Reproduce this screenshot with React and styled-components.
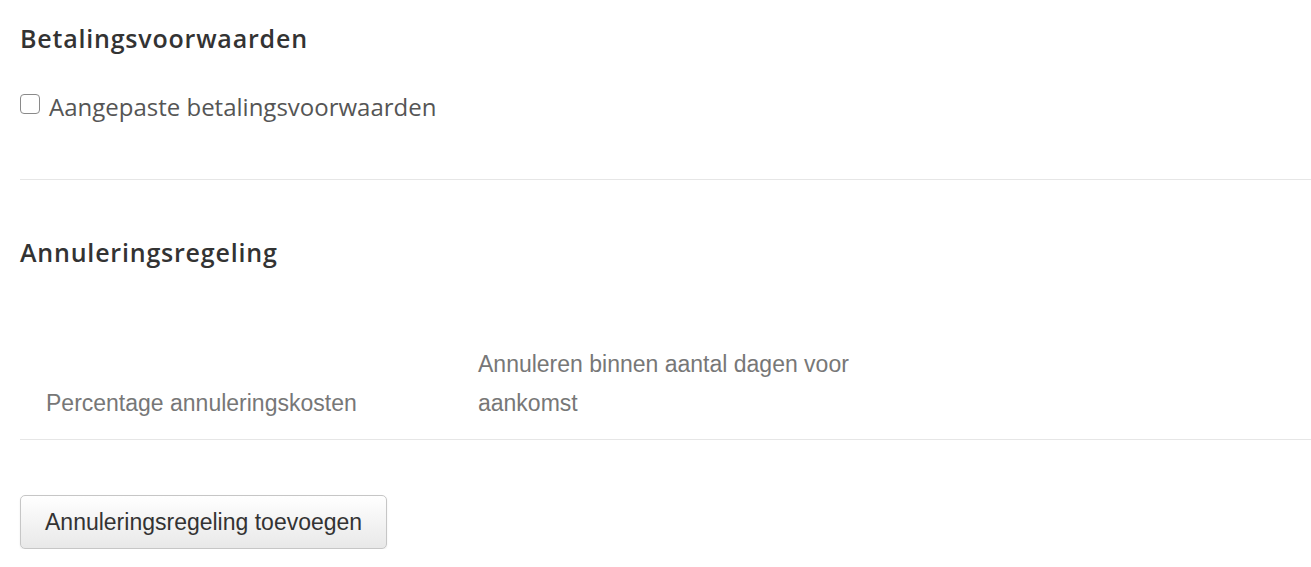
import React from 'react';
import styled, { createGlobalStyle } from 'styled-components';

const GlobalStyle = createGlobalStyle`
  body {
    margin: 0;
    background: #ffffff;
    font-family: "Liberation Sans", Arial, sans-serif;
  }
`;

const Page = styled.div`
  padding: 0 0 0 20px;
`;

const Section = styled.section`
  padding-top: ${props => props.top}px;
  padding-bottom: ${props => props.bottom || 0}px;
  border-bottom: ${props => props.divided ? '1px solid #e6e6e6' : 'none'};
`;

const Heading = styled.h2`
  margin: 0;
  font-family: "Open Sans", sans-serif;
  font-weight: 600;
  font-size: 25px;
  letter-spacing: 0.8px;
  line-height: 30px;
  color: #333333;
`;

const CheckRow = styled.label`
  display: flex;
  align-items: center;
  gap: 9px;
  margin-top: 39px;
  font-family: "Open Sans", sans-serif;
  font-size: 24px;
  line-height: 30px;
  color: #555555;
`;

const Box = styled.span`
  width: 18px;
  height: 18px;
  border: 1.5px solid #8a8a8a;
  border-radius: 4px;
  margin-top: -7px;
  flex: none;
`;

const HeadRow = styled.div`
  display: grid;
  grid-template-columns: 432px 432px 1fr;
  align-items: end;
  margin-top: 63px;
  padding: 15px 0 16px;
  border-bottom: 1px solid #e6e6e6;
`;

const HeadCell = styled.div`
  padding-left: 26px;
  padding-right: 20px;
  font-size: 23px;
  line-height: 39px;
  color: #777777;
`;

const Button = styled.button`
  margin-top: 55px;
  height: 54px;
  padding: 0 24px;
  font-family: "Liberation Sans", Arial, sans-serif;
  font-size: 23px;
  color: #333333;
  background: linear-gradient(#ffffff, #e8e8e8);
  border: 1px solid #c6c6c6;
  border-radius: 5px;
  box-shadow: 0 1px 2px rgba(0, 0, 0, 0.08);
`;

export default function App() {
  return (
    <Page>
      <GlobalStyle />
      <Section top={23} bottom={57} divided>
        <Heading>Betalingsvoorwaarden</Heading>
        <CheckRow>
          <Box />
          Aangepaste betalingsvoorwaarden
        </CheckRow>
      </Section>
      <Section top={57}>
        <Heading>Annuleringsregeling</Heading>
        <HeadRow>
          <HeadCell>Percentage annuleringskosten</HeadCell>
          <HeadCell>Annuleren binnen aantal dagen voor aankomst</HeadCell>
          <HeadCell />
        </HeadRow>
        <Button>Annuleringsregeling toevoegen</Button>
      </Section>
    </Page>
  );
}
